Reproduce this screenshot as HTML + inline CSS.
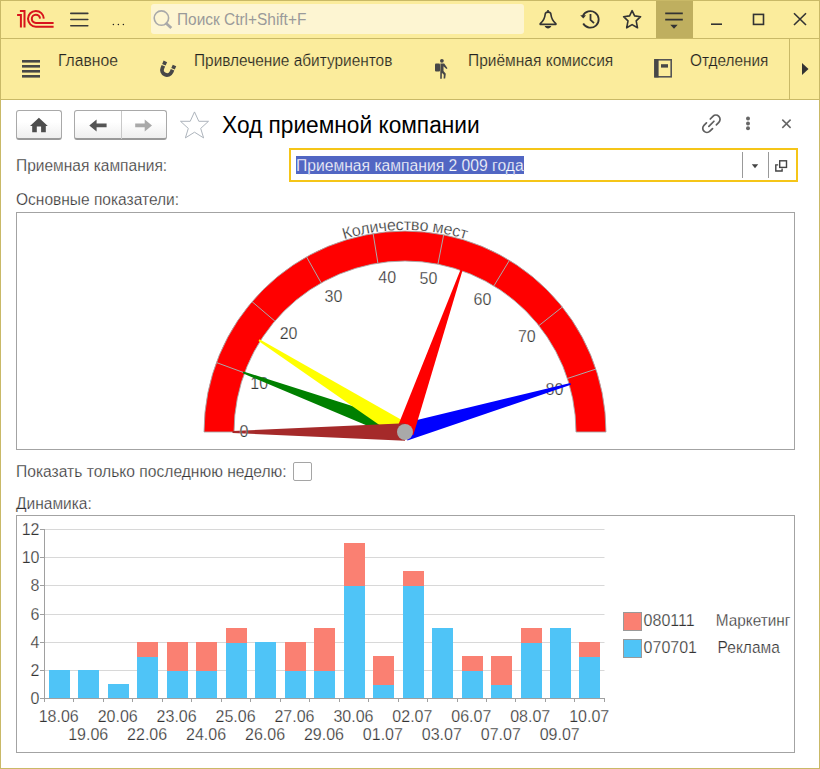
<!DOCTYPE html>
<html><head><meta charset="utf-8">
<style>
html,body{margin:0;padding:0;}
body{width:820px;height:769px;position:relative;overflow:hidden;background:#fff;font-family:"Liberation Sans",sans-serif;}
.a{position:absolute;}
.t{position:absolute;white-space:nowrap;line-height:16px;font-size:16px;transform-origin:0 0;}
.hl{position:absolute;height:1px;background:#C9B967;}
.vl{position:absolute;width:1px;background:#C9B967;}
.lbl{color:#333;-webkit-text-stroke:0.25px #fff;}
.sect{color:#222;-webkit-text-stroke:0.2px #FBEC9C;}
.box{position:absolute;border:1px solid #a3a3a3;background:#fff;}
svg{position:absolute;overflow:visible;}
</style></head><body>
<!-- top bar -->
<div class="a" style="left:0;top:0;width:820px;height:38px;background:#FBEC9C"></div>
<div class="a" style="left:0;top:39px;width:820px;height:60px;background:#FBEC9C"></div>
<div class="a" style="left:656px;top:1px;width:37px;height:37px;background:#BFAF5F"></div>
<div class="hl" style="left:0;top:0;width:820px;"></div>
<div class="hl" style="left:0;top:38px;width:820px;"></div>
<div class="hl" style="left:0;top:99px;width:820px;"></div>
<div class="vl" style="left:0;top:0;height:769px;"></div>
<div class="vl" style="left:819px;top:0;height:769px;"></div>
<div class="hl" style="left:0;top:768px;width:820px;"></div>
<div class="vl" style="left:789px;top:39px;height:60px;"></div>

<svg style="left:0;top:0" width="820" height="100" viewBox="0 0 820 100">
 <!-- 1C logo -->
 <g fill="none" stroke="#D8141C" stroke-width="2">
  <path d="M17.1 15H20.9V27.6M19.9 11.1H24.5V27.6"/>
  <path d="M43.8 18.6A7.9 7.9 0 1 0 35.9 26.7H53.6"/>
  <path d="M40 18.6A4.1 4.1 0 1 0 35.9 22.9H53.6"/>
 </g>
 <!-- hamburger -->
 <g stroke="#3a3a3a" stroke-width="1.6" stroke-linecap="round">
  <path d="M70.8 13.4H87.8M70.8 19.5H87.8M70.8 25.8H87.8"/>
 </g>
 <g fill="#222"><circle cx="113.4" cy="24.4" r="0.75"/><circle cx="118.4" cy="24.4" r="0.75"/><circle cx="123.4" cy="24.4" r="0.75"/></g>
 <!-- search -->
 <rect x="151" y="4" width="373" height="30" rx="3" fill="#FDF5D2"/>
 <g fill="none" stroke="#A9A9A9" stroke-width="1.6"><circle cx="161.4" cy="18.1" r="7.2"/></g>
 <path d="M165.5 22.8L171.3 28" stroke="#A9A9A9" stroke-width="2.8"/>
 <!-- bell -->
 <g fill="none" stroke="#333" stroke-width="1.6" stroke-linejoin="round">
  <path d="M545.4 13.2C545 16 544.8 20.5 540.2 23.6V24.4H555.9V23.6C551.3 20.5 551.1 16 550.7 13.2C549.6 11.8 546.5 11.8 545.4 13.2Z"/>
 </g>
 <circle cx="548" cy="11" r="1.1" fill="#333"/>
 <path d="M544.6 26H551.4C550.2 29.2 545.8 29.2 544.6 26Z" fill="#333"/>
 <!-- history -->
 <g fill="none" stroke="#333" stroke-width="1.8">
  <path d="M582.8 16A8.3 8.3 0 1 1 583.2 23.55"/>
  <path d="M590.5 14V19.8L594 23.2"/>
 </g>
 <path d="M580.2 15.2H586L583.3 18.6Z" fill="#333"/>
 <!-- star -->
 <path d="M632.1 10.6L634.6 15.9L640.6 16.7L636.2 20.8L637.5 27.8L632.1 24.6L626.7 27.8L628 20.8L623.6 16.7L629.6 15.9Z" fill="none" stroke="#333" stroke-width="1.6" stroke-linejoin="round"/>
 <!-- filter -->
 <path d="M665.2 13.4H682.8M665.2 19.6H682.8" stroke="#333" stroke-width="1.7"/>
 <path d="M670.3 24.8H677.7L674 28.8Z" fill="#333"/>
 <!-- min/max/close -->
 <path d="M711 24.2H722" stroke="#333" stroke-width="1.6"/>
 <rect x="753.5" y="14.4" width="10" height="10" fill="none" stroke="#333" stroke-width="1.6"/>
 <path d="M794 13.2L806 25M806 13.2L794 25" stroke="#333" stroke-width="1.6"/>
 <!-- section icons -->
 <g fill="#474747">
  <rect x="22" y="60" width="18" height="2.6"/>
  <rect x="22" y="65" width="18" height="2.6"/>
  <rect x="22" y="70" width="18" height="2.6"/>
  <rect x="22" y="75" width="18" height="2.6"/>
 </g>
 <!-- magnet -->
 <g transform="translate(167 70) rotate(24)">
  <path d="M-5 -2.4V0A5 5 0 0 0 5 0V-2.4M-5 -3.6V-7.2M5 -3.6V-7.2" fill="none" stroke="#474747" stroke-width="3.8"/>
 </g>
 <!-- walker -->
 <g fill="#474747">
  <circle cx="441.9" cy="60.8" r="1.9"/>
  <rect x="435" y="63.6" width="5" height="7.8" rx="1"/>
  <path d="M440.4 63.4H444.2L447.5 68.2L446.4 69L443.5 66.2V71L445.8 73.8L445.2 78.5H443.6L443.8 74.8L441.9 72.8L441.8 78.8H440.2Z"/>
 </g>
 <!-- otdeleniya -->
 <g>
  <rect x="655" y="59.8" width="16.2" height="17" fill="none" stroke="#555" stroke-width="1.6"/>
  <rect x="654.2" y="59.2" width="4.4" height="18.2" fill="#474747"/>
  <rect x="661" y="64.2" width="7" height="3.4" fill="#474747"/>
 </g>
 <!-- scroll arrow -->
 <path d="M802 63V75L808.5 69Z" fill="#333"/>
</svg>

<div class="t" style="left:177px;top:12px;color:#9a9a9a;transform:scaleX(0.964)">Поиск Ctrl+Shift+F</div>

<!-- section panel texts -->
<div class="t sect" style="left:58px;top:53px;transform:scaleX(0.98)">Главное</div>
<div class="t sect" style="left:193.5px;top:53px;transform:scaleX(0.963)">Привлечение абитуриентов</div>
<div class="t sect" style="left:468px;top:53px;transform:scaleX(0.97)">Приёмная комиссия</div>
<div class="t sect" style="left:689.5px;top:53px;transform:scaleX(0.96)">Отделения</div>

<!-- buttons -->
<div class="a" style="left:16px;top:110px;width:44px;height:27px;border:1px solid #a9a9a9;border-bottom:2px solid #9a9a9a;border-radius:3px;background:linear-gradient(#fff 40%,#efefef)"></div>
<div class="a" style="left:74px;top:110px;width:91px;height:27px;border:1px solid #a9a9a9;border-bottom:2px solid #9a9a9a;border-radius:3px;background:linear-gradient(#fff 40%,#efefef)"></div>
<div class="a" style="left:121px;top:111px;width:1px;height:28px;background:#c8c8c8"></div>
<svg style="left:0;top:100px" width="820" height="100" viewBox="0 100 820 100">
 <path d="M38.9 117.8L30 126H32.2V132.2H36.8V126.6H41.1V132.2H45.8V126H47.8Z" fill="#4d4d4d"/>
 <path d="M89.3 125.4L96.6 119.4V123.5H106.6V127.3H96.6V131.6Z" fill="#555"/>
 <path d="M152 125.4L144.7 119.4V123.5H135.2V127.3H144.7V131.6Z" fill="#a9a9a9"/>
 <path d="M194.5 111.9L198.8 121.3H208.5L200.7 128.4L203.6 137.9L194.5 132.2L185.4 137.9L188.3 128.4L180.5 121.3H190.2Z" fill="none" stroke="#a9b0b8" stroke-width="0.95" stroke-linejoin="miter"/>
 <!-- link -->
 <g fill="none" stroke="#5e5e5e" stroke-width="1.7" stroke-linecap="round">
  <g transform="translate(711.4 123.8) rotate(-45)"><path d="M2.6 -4.2H6.3A4.2 4.2 0 0 1 6.3 4.2H2.8M-2.6 4.2H-6.3A4.2 4.2 0 0 1 -6.3 -4.2H-2.8M-3.6 0H3.6"/></g>
 </g>
 <g fill="#666"><circle cx="748" cy="118.6" r="2"/><circle cx="748" cy="123.4" r="2"/><circle cx="748" cy="128.2" r="2"/></g>
 <path d="M782.3 119.6L790.6 127.9M790.6 119.6L782.3 127.9" stroke="#666" stroke-width="1.5"/>
 <!-- input -->
 <rect x="290" y="149" width="507" height="32" fill="#fff" stroke="#F5C518" stroke-width="2"/>
 <rect x="296" y="156" width="228" height="18" fill="#5166C3"/>
 <path d="M742.5 152V178M768.5 152V178" stroke="#999" stroke-width="1"/>
 <path d="M751.8 164.2H758.2L755 168.2Z" fill="#444"/>
 <g fill="none" stroke="#444" stroke-width="1.4">
  <rect x="779.7" y="160.8" width="6.8" height="6.6"/>
  <path d="M778.2 164.9H775.8V171H782.1V168.6"/>
 </g>
</svg>

<div class="t" style="left:222px;top:112.9px;font-size:22.7px;line-height:22px;color:#000;transform:scaleY(1.07)">Ход приемной компании</div>
<div class="t" style="left:295.8px;top:158px;color:#fff;-webkit-text-stroke:0.25px #5166C3;transform:scaleX(0.979)">Приемная кампания 2 009 года</div>

<div class="t lbl" style="left:16px;top:158px;transform:scaleX(0.97)">Приемная кампания:</div>
<div class="t lbl" style="left:16px;top:192px;transform:scaleX(0.97)">Основные показатели:</div>
<div class="t lbl" style="left:16px;top:464px;transform:scaleX(0.976)">Показать только последнюю неделю:</div>
<div class="t lbl" style="left:16px;top:496px;transform:scaleX(0.97)">Динамика:</div>
<div class="a" style="left:293px;top:462px;width:17px;height:17px;border:1px solid #a5a5a5;border-radius:2px;background:#fff"></div>

<div class="box" style="left:16px;top:212px;width:777px;height:236px"></div>
<div class="box" style="left:16px;top:515px;width:777px;height:236px"></div>

<svg style="left:0;top:0" width="820" height="769" viewBox="0 0 820 769">
<path d="M204 432 A201 201 0 0 1 606 432 L576 432 A171 171 0 0 0 234 432 Z" fill="#FF0000" stroke="#a8a8a8" stroke-width="0.9"/>
<path d="M244.54 372.90L216.39 362.53M274.85 321.08L252.02 301.62M321.21 282.93L306.51 256.78M377.90 263.16L373.14 233.54M437.92 264.20L443.70 234.76M493.89 285.92L509.48 260.29M538.90 325.64L562.39 306.98M567.41 378.48L595.90 369.09" stroke="#aaaaaa" stroke-width="1" fill="none"/>
<g font-family="Liberation Sans" font-size="16" fill="#333" stroke="#fff" stroke-width="0.25"><text transform="translate(348.55 238.05) rotate(-16.23)" x="-4.66" y="0">К</text><text transform="translate(357.19 235.74) rotate(-13.69)" x="-4.45" y="0">о</text><text transform="translate(365.92 233.82) rotate(-11.15)" x="-4.67" y="0">л</text><text transform="translate(374.76 232.28) rotate(-8.61)" x="-4.47" y="0">и</text><text transform="translate(383.15 231.19) rotate(-6.21)" x="-4.17" y="0">ч</text><text transform="translate(391.56 230.45) rotate(-3.81)" x="-4.45" y="0">е</text><text transform="translate(399.83 230.07) rotate(-1.47)" x="-4.00" y="0">с</text><text transform="translate(407.33 230.01) rotate(0.66)" x="-3.66" y="0">т</text><text transform="translate(415.07 230.25) rotate(2.86)" x="-4.25" y="0">в</text><text transform="translate(423.58 230.86) rotate(5.28)" x="-4.45" y="0">о</text><text transform="translate(437.51 232.63) rotate(9.26)" x="-5.50" y="0">м</text><text transform="translate(447.12 234.44) rotate(12.04)" x="-4.45" y="0">е</text><text transform="translate(455.18 236.33) rotate(14.38)" x="-4.00" y="0">с</text><text transform="translate(462.41 238.33) rotate(16.51)" x="-3.66" y="0">т</text></g>
<text x="259.2" y="389.4" text-anchor="middle" font-family="Liberation Sans" font-size="16" fill="#333" stroke="#fff" stroke-width="0.25">10</text>
<text x="288.6" y="338.9" text-anchor="middle" font-family="Liberation Sans" font-size="16" fill="#333" stroke="#fff" stroke-width="0.25">20</text>
<text x="333.4" y="301.9" text-anchor="middle" font-family="Liberation Sans" font-size="16" fill="#333" stroke="#fff" stroke-width="0.25">30</text>
<text x="387.2" y="282.9" text-anchor="middle" font-family="Liberation Sans" font-size="16" fill="#333" stroke="#fff" stroke-width="0.25">40</text>
<text x="428.5" y="283.7" text-anchor="middle" font-family="Liberation Sans" font-size="16" fill="#333" stroke="#fff" stroke-width="0.25">50</text>
<text x="482.5" y="304.6" text-anchor="middle" font-family="Liberation Sans" font-size="16" fill="#333" stroke="#fff" stroke-width="0.25">60</text>
<text x="526.8" y="342.4" text-anchor="middle" font-family="Liberation Sans" font-size="16" fill="#333" stroke="#fff" stroke-width="0.25">70</text>
<text x="554.4" y="394.5" text-anchor="middle" font-family="Liberation Sans" font-size="16" fill="#333" stroke="#fff" stroke-width="0.25">80</text>
<path d="M402.54 423.55L570.37 382.91L570.93 384.83L407.46 440.45Z" fill="#0000FF"/>
<path d="M401.96 440.26L242.76 373.37L243.46 371.50L408.04 423.74Z" fill="#008000"/>
<path d="M400.31 439.45L258.50 340.93L259.56 339.23L409.69 424.55Z" fill="#FFFF00"/>
<path d="M396.69 429.10L460.90 268.81L462.79 269.46L413.31 434.90Z" fill="#FF0000"/>
<path d="M405.00 440.80L232.50 433.00L232.50 431.00L405.00 423.20Z" fill="#A52A2A"/>
<circle cx="405" cy="432" r="8" fill="#A9A9A9"/>
<text x="244.0" y="436.7" text-anchor="middle" font-family="Liberation Sans" font-size="16" fill="#333" stroke="#fff" stroke-width="0.25">0</text>
<path d="M44 670.5H604.5" stroke="#d8d8d8" stroke-width="1"/>
<path d="M44 642.5H604.5" stroke="#d8d8d8" stroke-width="1"/>
<path d="M44 614.5H604.5" stroke="#d8d8d8" stroke-width="1"/>
<path d="M44 585.5H604.5" stroke="#d8d8d8" stroke-width="1"/>
<path d="M44 557.5H604.5" stroke="#d8d8d8" stroke-width="1"/>
<path d="M44 529.5H604.5" stroke="#d8d8d8" stroke-width="1"/>
<path d="M40 698.5H44" stroke="#a0a0a0" stroke-width="1"/>
<text x="39.5" y="703.7" text-anchor="end" font-family="Liberation Sans" font-size="16" fill="#333" stroke="#fff" stroke-width="0.25">0</text>
<path d="M40 670.5H44" stroke="#a0a0a0" stroke-width="1"/>
<text x="39.5" y="675.7" text-anchor="end" font-family="Liberation Sans" font-size="16" fill="#333" stroke="#fff" stroke-width="0.25">2</text>
<path d="M40 642.5H44" stroke="#a0a0a0" stroke-width="1"/>
<text x="39.5" y="647.7" text-anchor="end" font-family="Liberation Sans" font-size="16" fill="#333" stroke="#fff" stroke-width="0.25">4</text>
<path d="M40 614.5H44" stroke="#a0a0a0" stroke-width="1"/>
<text x="39.5" y="619.7" text-anchor="end" font-family="Liberation Sans" font-size="16" fill="#333" stroke="#fff" stroke-width="0.25">6</text>
<path d="M40 585.5H44" stroke="#a0a0a0" stroke-width="1"/>
<text x="39.5" y="590.7" text-anchor="end" font-family="Liberation Sans" font-size="16" fill="#333" stroke="#fff" stroke-width="0.25">8</text>
<path d="M40 557.5H44" stroke="#a0a0a0" stroke-width="1"/>
<text x="39.5" y="562.7" text-anchor="end" font-family="Liberation Sans" font-size="16" fill="#333" stroke="#fff" stroke-width="0.25">10</text>
<path d="M40 529.5H44" stroke="#a0a0a0" stroke-width="1"/>
<text x="39.5" y="534.7" text-anchor="end" font-family="Liberation Sans" font-size="16" fill="#333" stroke="#fff" stroke-width="0.25">12</text>
<rect x="49" y="670" width="21" height="28" fill="#4FC4F7"/>
<text x="58.73" y="722.3" text-anchor="middle" font-family="Liberation Sans" font-size="16" fill="#333" stroke="#fff" stroke-width="0.25">18.06</text>
<rect x="78" y="670" width="21" height="28" fill="#4FC4F7"/>
<text x="88.20" y="740.3" text-anchor="middle" font-family="Liberation Sans" font-size="16" fill="#333" stroke="#fff" stroke-width="0.25">19.06</text>
<rect x="108" y="684" width="21" height="14" fill="#4FC4F7"/>
<text x="117.67" y="722.3" text-anchor="middle" font-family="Liberation Sans" font-size="16" fill="#333" stroke="#fff" stroke-width="0.25">20.06</text>
<rect x="137" y="656" width="21" height="42" fill="#4FC4F7"/>
<rect x="137" y="642" width="21" height="15" fill="#FA8072"/>
<text x="147.14" y="740.3" text-anchor="middle" font-family="Liberation Sans" font-size="16" fill="#333" stroke="#fff" stroke-width="0.25">22.06</text>
<rect x="167" y="670" width="21" height="28" fill="#4FC4F7"/>
<rect x="167" y="642" width="21" height="29" fill="#FA8072"/>
<text x="176.61" y="722.3" text-anchor="middle" font-family="Liberation Sans" font-size="16" fill="#333" stroke="#fff" stroke-width="0.25">23.06</text>
<rect x="196" y="670" width="21" height="28" fill="#4FC4F7"/>
<rect x="196" y="642" width="21" height="29" fill="#FA8072"/>
<text x="206.08" y="740.3" text-anchor="middle" font-family="Liberation Sans" font-size="16" fill="#333" stroke="#fff" stroke-width="0.25">24.06</text>
<rect x="226" y="642" width="21" height="56" fill="#4FC4F7"/>
<rect x="226" y="628" width="21" height="15" fill="#FA8072"/>
<text x="235.54" y="722.3" text-anchor="middle" font-family="Liberation Sans" font-size="16" fill="#333" stroke="#fff" stroke-width="0.25">25.06</text>
<rect x="255" y="642" width="21" height="56" fill="#4FC4F7"/>
<text x="265.01" y="740.3" text-anchor="middle" font-family="Liberation Sans" font-size="16" fill="#333" stroke="#fff" stroke-width="0.25">26.06</text>
<rect x="285" y="670" width="21" height="28" fill="#4FC4F7"/>
<rect x="285" y="642" width="21" height="29" fill="#FA8072"/>
<text x="294.48" y="722.3" text-anchor="middle" font-family="Liberation Sans" font-size="16" fill="#333" stroke="#fff" stroke-width="0.25">27.06</text>
<rect x="314" y="670" width="21" height="28" fill="#4FC4F7"/>
<rect x="314" y="628" width="21" height="43" fill="#FA8072"/>
<text x="323.95" y="740.3" text-anchor="middle" font-family="Liberation Sans" font-size="16" fill="#333" stroke="#fff" stroke-width="0.25">29.06</text>
<rect x="344" y="585" width="21" height="113" fill="#4FC4F7"/>
<rect x="344" y="543" width="21" height="43" fill="#FA8072"/>
<text x="353.42" y="722.3" text-anchor="middle" font-family="Liberation Sans" font-size="16" fill="#333" stroke="#fff" stroke-width="0.25">30.06</text>
<rect x="373" y="684" width="21" height="14" fill="#4FC4F7"/>
<rect x="373" y="656" width="21" height="29" fill="#FA8072"/>
<text x="382.89" y="740.3" text-anchor="middle" font-family="Liberation Sans" font-size="16" fill="#333" stroke="#fff" stroke-width="0.25">01.07</text>
<rect x="403" y="585" width="21" height="113" fill="#4FC4F7"/>
<rect x="403" y="571" width="21" height="15" fill="#FA8072"/>
<text x="412.36" y="722.3" text-anchor="middle" font-family="Liberation Sans" font-size="16" fill="#333" stroke="#fff" stroke-width="0.25">02.07</text>
<rect x="432" y="628" width="21" height="70" fill="#4FC4F7"/>
<text x="441.82" y="740.3" text-anchor="middle" font-family="Liberation Sans" font-size="16" fill="#333" stroke="#fff" stroke-width="0.25">03.07</text>
<rect x="462" y="670" width="21" height="28" fill="#4FC4F7"/>
<rect x="462" y="656" width="21" height="15" fill="#FA8072"/>
<text x="471.29" y="722.3" text-anchor="middle" font-family="Liberation Sans" font-size="16" fill="#333" stroke="#fff" stroke-width="0.25">06.07</text>
<rect x="491" y="684" width="21" height="14" fill="#4FC4F7"/>
<rect x="491" y="656" width="21" height="29" fill="#FA8072"/>
<text x="500.76" y="740.3" text-anchor="middle" font-family="Liberation Sans" font-size="16" fill="#333" stroke="#fff" stroke-width="0.25">07.07</text>
<rect x="521" y="642" width="21" height="56" fill="#4FC4F7"/>
<rect x="521" y="628" width="21" height="15" fill="#FA8072"/>
<text x="530.23" y="722.3" text-anchor="middle" font-family="Liberation Sans" font-size="16" fill="#333" stroke="#fff" stroke-width="0.25">08.07</text>
<rect x="550" y="628" width="21" height="70" fill="#4FC4F7"/>
<text x="559.70" y="740.3" text-anchor="middle" font-family="Liberation Sans" font-size="16" fill="#333" stroke="#fff" stroke-width="0.25">09.07</text>
<rect x="579" y="656" width="21" height="42" fill="#4FC4F7"/>
<rect x="579" y="642" width="21" height="15" fill="#FA8072"/>
<text x="589.17" y="722.3" text-anchor="middle" font-family="Liberation Sans" font-size="16" fill="#333" stroke="#fff" stroke-width="0.25">10.07</text>
<path d="M44.5 529V698" stroke="#a0a0a0" stroke-width="1"/>
<path d="M44 698.5H604.5" stroke="#a0a0a0" stroke-width="1"/>
<path d="M44.5 698V702" stroke="#a0a0a0" stroke-width="1"/>
<path d="M73.5 698V702" stroke="#a0a0a0" stroke-width="1"/>
<path d="M103.5 698V702" stroke="#a0a0a0" stroke-width="1"/>
<path d="M132.5 698V702" stroke="#a0a0a0" stroke-width="1"/>
<path d="M162.5 698V702" stroke="#a0a0a0" stroke-width="1"/>
<path d="M191.5 698V702" stroke="#a0a0a0" stroke-width="1"/>
<path d="M221.5 698V702" stroke="#a0a0a0" stroke-width="1"/>
<path d="M250.5 698V702" stroke="#a0a0a0" stroke-width="1"/>
<path d="M280.5 698V702" stroke="#a0a0a0" stroke-width="1"/>
<path d="M309.5 698V702" stroke="#a0a0a0" stroke-width="1"/>
<path d="M339.5 698V702" stroke="#a0a0a0" stroke-width="1"/>
<path d="M368.5 698V702" stroke="#a0a0a0" stroke-width="1"/>
<path d="M398.5 698V702" stroke="#a0a0a0" stroke-width="1"/>
<path d="M427.5 698V702" stroke="#a0a0a0" stroke-width="1"/>
<path d="M457.5 698V702" stroke="#a0a0a0" stroke-width="1"/>
<path d="M486.5 698V702" stroke="#a0a0a0" stroke-width="1"/>
<path d="M515.5 698V702" stroke="#a0a0a0" stroke-width="1"/>
<path d="M545.5 698V702" stroke="#a0a0a0" stroke-width="1"/>
<path d="M574.5 698V702" stroke="#a0a0a0" stroke-width="1"/>
<path d="M604.5 698V702" stroke="#a0a0a0" stroke-width="1"/>
<rect x="623.5" y="612.5" width="18" height="18" fill="#FA8072" stroke="#999" stroke-width="1"/>
<rect x="623.5" y="639.5" width="18" height="18" fill="#4FC4F7" stroke="#999" stroke-width="1"/>
<text x="643.6" y="626.2" font-family="Liberation Sans" font-size="16" fill="#333" stroke="#fff" stroke-width="0.25">080111</text>
<text x="643.6" y="653.2" font-family="Liberation Sans" font-size="16" fill="#333" stroke="#fff" stroke-width="0.25">070701</text>
<text x="715.8" y="626.2" font-family="Liberation Sans" font-size="16" fill="#333" stroke="#fff" stroke-width="0.25" transform="translate(715.8 0) scale(0.96 1) translate(-715.8 0)">Маркетинг</text>
<text x="717.6" y="653.2" font-family="Liberation Sans" font-size="16" fill="#333" stroke="#fff" stroke-width="0.25" transform="translate(717.6 0) scale(0.97 1) translate(-717.6 0)">Реклама</text>
</svg>
</body></html>
